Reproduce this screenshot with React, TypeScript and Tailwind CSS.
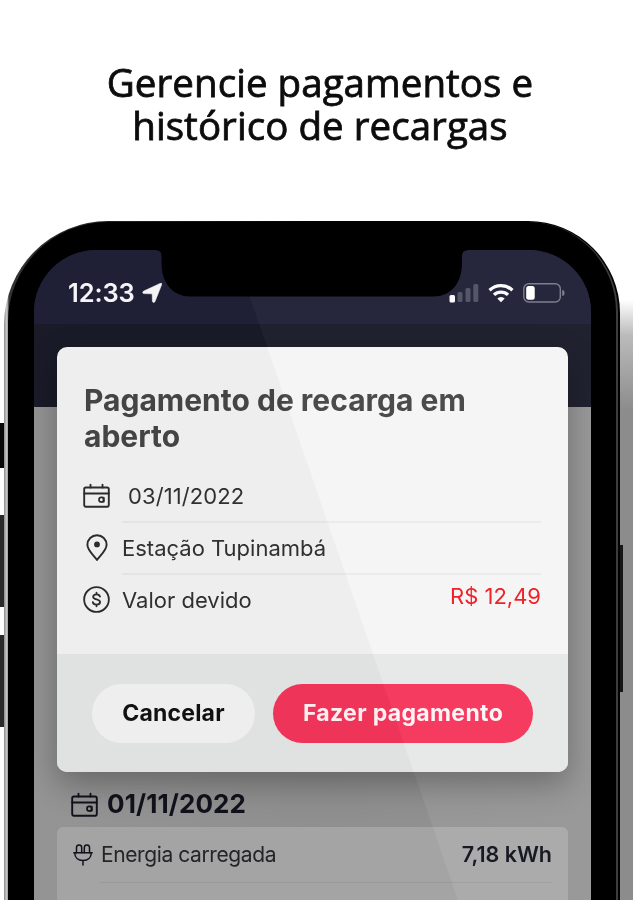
import { ReactNode } from "react";

type IconProps = { className?: string };

function CalendarIcon({ className }: IconProps) {
  return (
    <svg className={className} width="27" height="25" viewBox="0 0 27 25" fill="none" stroke="currentColor" strokeWidth="1.9" strokeLinecap="round">
      <rect x="1.2" y="4.5" width="24.600" height="19.200" rx="1.6" />
      <path d="M1.200 10.500h24.600M7.500 4.500V1.700M19.500 4.500V1.700" />
      <circle cx="18.300" cy="16.700" r="2.300" strokeWidth="1.700" />
      <path d="M18.800 14.300h2.400v4.800h-2.400" strokeWidth="1" />
    </svg>
  );
}

function PinIcon() {
  return (
    <svg width="22" height="28" viewBox="0 0 22 28" fill="none" stroke="currentColor" strokeWidth="1.9">
      <path d="M11 26C7.600 21.400 1.400 16.400 1.400 10.800a9.600 9.600 0 0 1 19.200 0c0 5.600-6.200 10.600-9.600 15.200Z" strokeLinejoin="round" />
      <circle cx="11" cy="10.400" r="2.900" fill="currentColor" stroke="none" />
    </svg>
  );
}

function CoinIcon() {
  return (
    <svg width="27" height="27" viewBox="0 0 28 28" fill="none" stroke="currentColor" strokeWidth="1.9" strokeLinecap="round">
      <circle cx="14" cy="14" r="12.800" />
      <path d="M17.600 11c-.3-1.500-1.700-2.400-3.600-2.400s-3.500 1-3.500 2.600c0 3.600 7.200 1.900 7.200 5.500 0 1.700-1.600 2.700-3.700 2.700s-3.600-1-3.800-2.600M14 7v1.600M14 19.400V21" />
    </svg>
  );
}

function PlugIcon() {
  return (
    <svg width="20" height="22" viewBox="0 0 20 22" fill="none" stroke="currentColor" strokeWidth="1.500" strokeLinecap="round" strokeLinejoin="round">
      <path d="M.8 8.800h18.400M1.700 8.800c0 4.800 3.400 7.700 8.300 7.700s8.300-2.900 8.300-7.700M10 16.500V21" />
      <path d="M3.500 8.800V3.500a2.600 2.600 0 0 1 5.200 0v5.300M11.300 8.800V3.500a2.600 2.600 0 0 1 5.200 0v5.300" />
    </svg>
  );
}

function LocationArrow() {
  return (
    <svg width="20" height="20" viewBox="0 0 20 20" fill="currentColor">
      <path d="M19.800 1.300 13 18.400c-.6 1.600-2.500 1.400-2.600-.3l-.2-6.400c0-.7-.2-.9-.9-.9l-7.100-.2c-1.700 0-2-1.900-.4-2.500L18.600.2c.9-.3 1.500.2 1.200 1.100Z" stroke="currentColor" strokeWidth=".6" />
    </svg>
  );
}

function SignalIcon() {
  return (
    <svg width="30" height="20" viewBox="0 0 30 20" fill="currentColor">
      <rect x=".5" y="12" width="5.500" height="7.500" rx="1.500" />
      <g opacity=".22">
        <rect x="8.500" y="9" width="5" height="10" rx="1.500" />
        <rect x="16.500" y="5" width="5" height="14" rx="1.500" />
        <rect x="24.300" y="1" width="5" height="18" rx="1.500" />
      </g>
    </svg>
  );
}

function WifiIcon() {
  return (
    <svg width="26" height="20" viewBox="0 0 26 20" fill="none" stroke="currentColor" strokeWidth="3.300">
      <path d="M1.600 7.300a16.300 16.300 0 0 1 22.800 0" />
      <path d="M6 11.900a10 10 0 0 1 14 0" />
      <path d="M13 19.200 9.300 15.500a5.200 5.200 0 0 1 7.400 0Z" fill="currentColor" stroke="none" />
    </svg>
  );
}

function BatteryIcon() {
  return (
    <svg width="42" height="20" viewBox="0 0 42 20" fill="none">
      <rect x=".8" y=".8" width="36.500" height="18.200" rx="5" stroke="#777885" strokeWidth="1.400" />
      <path d="M39.200 6.700c1.600.6 2.400 1.700 2.400 3.200s-.8 2.600-2.400 3.200Z" fill="#777885" />
      <rect x="3.200" y="3" width="8.500" height="13.800" rx="2.500" fill="#fff" />
    </svg>
  );
}

function Notch() {
  return (
    <svg className="absolute left-[119px] top-0" width="318" height="47" viewBox="0 0 318 47">
      <path d="M0 0h318c-6 0-9 1.500-9 6v7c0 20-11 33.500-28 33.500H37C20 46.500 8.500 33 8.500 13V6C8.500 1.500 6 0 0 0Z" fill="#000" />
    </svg>
  );
}

function StatusBar() {
  return (
    <div className="flex h-[74px] items-start justify-between bg-[#1f2036] pl-[34px] pr-[26px] pt-[28px] text-[#f4f4f6]">
      <div className="flex items-center gap-[7px]">
        <span className="text-[25.500px] font-semibold leading-[30px] tracking-[-0.1px]">12:33</span>
        <LocationArrow />
      </div>
      <div className="mt-[5px] flex items-center">
        <SignalIcon />
        <span className="ml-[9px]"><WifiIcon /></span>
        <span className="ml-[9px]"><BatteryIcon /></span>
      </div>
    </div>
  );
}

type RowProps = { icon: ReactNode; children: ReactNode; last?: boolean };

function DetailRow({ icon, children, last }: RowProps) {
  return (
    <div className="flex h-[52px]">
      <div className={`flex w-[39px] items-center text-[#2b2b2b] ${last ? "pb-[3px]" : "pb-[2px]"}`}>
        <div className="flex w-[27px] justify-center">{icon}</div>
      </div>
      <div className={`flex flex-1 items-center justify-between text-[22px] text-[#303030] ${last ? "pb-[2px]" : "border-b-2 border-[#e4e4e4]"}`}>
        {children}
      </div>
    </div>
  );
}

function PaymentDialog() {
  return (
    <div className="absolute left-[23px] top-[97px] flex h-[425px] w-[511px] flex-col overflow-hidden rounded-[10px] bg-[#eeeeee] shadow-[0_12px_32px_rgba(0,0,0,0.3)]">
      <div className="h-[307px] pl-[26px] pr-[27px] pt-[35px]">
        <h2 className="whitespace-nowrap pl-px text-[30px] font-bold leading-[36px] text-[#444444]">
          Pagamento de recarga em
          <br />
          aberto
        </h2>
        <div className="mt-[17px]">
          <DetailRow icon={<CalendarIcon className="-mt-px" />}>
            <span className="pl-[6px] tracking-[0.1px]">03/11/2022</span>
          </DetailRow>
          <DetailRow icon={<PinIcon />}>Estação Tupinambá</DetailRow>
          <DetailRow icon={<CoinIcon />} last>
            <span>Valor devido</span>
            <span className="mb-[8px] text-[#e91b22]">R$ 12,49</span>
          </DetailRow>
        </div>
      </div>
      <div className="flex flex-1 items-center gap-[18px] bg-[#e0e1e1] pl-[35px]">
        <button className="h-[59px] w-[163px] rounded-full bg-[#eeeeee] text-[23px] font-bold tracking-[0.2px] text-[#111]">
          Cancelar
        </button>
        <button className="h-[59px] w-[260px] rounded-full bg-[#ef3459] text-[23px] font-bold tracking-[0.35px] text-[#ffeef0]">
          Fazer pagamento
        </button>
      </div>
    </div>
  );
}

function HistoryList() {
  return (
    <div className="h-[493px] bg-[linear-gradient(90deg,#949494,#8f8f8f_50%,#929292)] px-[23px] pt-[376px] text-[#11121c]">
      <div className="flex h-[44px] items-start gap-[9px] pl-[14px]">
        <CalendarIcon className="mt-[9px]" />
        <span className="text-[26px] font-bold leading-[41px] tracking-[0.1px]">01/11/2022</span>
      </div>
      <div className="h-[73px] rounded-t-[6px] bg-[#a4a4a4] px-4">
        <div className="flex h-[55px] items-center">
          <PlugIcon />
          <span className="ml-[8px] flex-1 text-[21px] tracking-[-0.4px] text-[#242429]">Energia carregada</span>
          <span className="text-[21.500px] font-semibold">7,18 kWh</span>
        </div>
        <div className="ml-[27px] h-px bg-[#999999]" />
      </div>
    </div>
  );
}

function Phone() {
  return (
    <div className="relative ml-[4px] mt-[74px] h-[679px] w-[616px] rounded-tl-[104px] rounded-tr-[92px] bg-[linear-gradient(90deg,#8c8c8c_0,#d0d0d0_3px,#333_5px,#000_50%)] pl-[4px] pt-[1px]">
      {/* side buttons */}
      <div className="absolute -left-1 top-[202px] h-[45px] w-[4px] bg-[#080808]" />
      <div className="absolute -left-1 top-[294px] h-[92px] w-[4px] bg-[#2a2a2a]" />
      <div className="absolute -left-1 top-[414px] h-[92px] w-[4px] bg-[#2a2a2a]" />
      <div className="absolute -right-[3px] top-[324px] h-[147px] w-[3px] bg-[#171717]" />

      <div className="h-[678px] w-[610px] rounded-tl-[100px] rounded-tr-[90px] border-r-2 border-[#3c3c3c] bg-black pl-[26px] pt-[28px]">
        <div className="relative h-[650px] w-[557px] overflow-hidden rounded-t-[62px] bg-[#1a1b29]">
          <StatusBar />
          <div className="h-[83px] bg-[#1a1b29]" />
          <HistoryList />
          <PaymentDialog />
          {/* glass reflection */}
          <div className="pointer-events-none absolute inset-0 bg-[#070707] mix-blend-plus-lighter [clip-path:polygon(200px_0,100%_0,100%_100%,424px_100%,216px_47px)]" />
          <Notch />
        </div>
      </div>
    </div>
  );
}

export default function App() {
  return (
    <main className="relative h-[900px] w-[633px] overflow-hidden bg-white font-[Inter,sans-serif]">
      <div className="absolute -right-[10px] top-[300px] h-[700px] w-[60px] bg-[linear-gradient(180deg,transparent,#bbb_35px,#8c8c8c_110px)]" />
      <h1 className="relative pl-[7px] pt-[61px] text-center font-['Open_Sans',sans-serif] text-[38.500px] font-medium leading-[43px] tracking-[0.050px] text-[#0c0c0c] [-webkit-text-stroke:0.8px_#0c0c0c]">
        Gerencie pagamentos e
        <br />
        histórico de recargas
      </h1>
      <Phone />
    </main>
  );
}
